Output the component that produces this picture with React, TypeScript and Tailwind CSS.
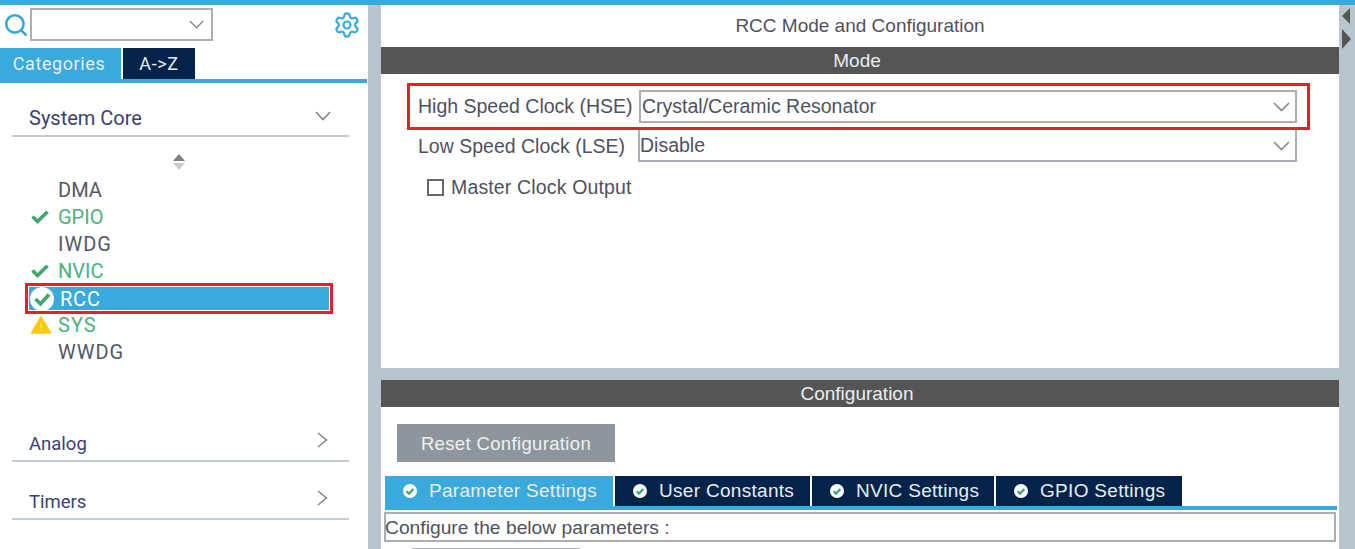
import { Search, Settings } from 'lucide-react';

const sans = "font-['Liberation_Sans',sans-serif]";
const roboto = "font-['Roboto',sans-serif]";

function Chev({ w = 17, h = 10, color = '#85898d' }: { w?: number; h?: number; color?: string }) {
  return (
    <svg width={w} height={h} viewBox="0 0 17 10" preserveAspectRatio="none" className="shrink-0">
      <path d="M1 1 L8.5 8.5 L16 1" fill="none" stroke={color} strokeWidth="1.6" />
    </svg>
  );
}

function ChevRight() {
  return (
    <svg width="11" height="16" viewBox="0 0 11 16" className="-mt-[5px] shrink-0">
      <path d="M1 1 L9.5 8 L1 15" fill="none" stroke="#7d8286" strokeWidth="1.4" />
    </svg>
  );
}

function TabCheck() {
  return (
    <svg width="14" height="14" viewBox="0 0 14 14" className="shrink-0">
      <circle cx="7" cy="7" r="7" fill="#ffffff" />
      <path d="M3.6 7.2 L6 9.6 L10.4 4.9" fill="none" stroke="#3aa56e" strokeWidth="2.2" />
    </svg>
  );
}

function Warn() {
  return (
    <svg width="20" height="18" viewBox="0 0 20 18">
      <path d="M10 1 L19.5 17 L0.5 17 Z" fill="#fdc900" stroke="#fdc900" strokeLinejoin="round" strokeWidth="1.5" />
      <path d="M10 7 V12 M10 13.5 V15" stroke="#fff3b0" strokeWidth="1.2" />
    </svg>
  );
}

function Item({ name, state, wide }: { name: string; state?: 'ok' | 'warn'; wide?: boolean }) {
  return (
    <div className="flex h-[27px] items-center">
      <span className="ml-[31px] flex w-[27px] items-center">
        {state === 'ok' && (
          <svg width="18" height="14" viewBox="0 0 18 14">
            <path d="M1.5 6.5 L6.5 11.5 L16.5 1.8" fill="none" stroke="#3fa86f" strokeWidth="3.6" />
          </svg>
        )}
        {state === 'warn' && <Warn />}
      </span>
      <span className={`${state ? 'text-[#4bb27e]' : 'text-[#55566a]'} ${wide ? 'tracking-[1px]' : ''}`}>{name}</span>
    </div>
  );
}

function Category({ name, open }: { name: string; open?: boolean }) {
  return (
    <div className="mx-3 flex h-[38px] w-[337px] items-center justify-between border-b-2 border-[#c3ccd2] pl-[17px] text-[#3a4270]">
      {open ? (
        <>
          <span className="pt-[1px]">{name}</span>
          <span className="mr-[18px] -mt-[3px]"><Chev w={16} h={10} color="#7d8286" /></span>
        </>
      ) : (
        <>
          <span className="pt-[5px] text-[18.5px]">{name}</span>
          <span className="mr-[21px]"><ChevRight /></span>
        </>
      )}
    </div>
  );
}

function ConfigTab({ label, active, width }: { label: string; active?: boolean; width: string }) {
  return (
    <div className={`flex h-[30px] items-center gap-[12px] pl-[18px] text-[19px] tracking-[0.3px] text-[#e8eef2] ${width} ${active ? 'bg-[#3aa9dc]' : 'bg-[#03234b]'}`}>
      <TabCheck />
      <span>{label}</span>
    </div>
  );
}

export default function App() {
  return (
    <div className={`flex h-[549px] w-[1355px] flex-col overflow-hidden bg-[#b9c5cc] text-[19.5px] ${sans}`}>
      <div className="h-[5px] shrink-0 bg-[#3aa9dc]" />
      <div className="flex min-h-0 flex-1">
        {/* left panel */}
        <div className={`mr-[13px] w-[368px] shrink-0 bg-white text-[20px] ${roboto}`}>
          <div className="flex items-center pl-[3px] pr-[8px] pt-[3px]">
            <Search size={26} strokeWidth={2.4} className="-mr-[1px] mt-[1px] text-[#3aa9dc]" />
            <div className="ml-[2px] flex h-[33px] w-[183px] items-center justify-end border-2 border-[#a9afb4] pr-[7px]">
              <Chev w={15} h={9} />
            </div>
            <Settings size={28} strokeWidth={1.9} className="ml-auto -mr-[1px] text-[#3aa9dc]" />
          </div>
          <div className="mt-[7px] flex h-[31px] items-stretch gap-[2px] text-[18px] tracking-[0.6px] text-[#e4eef4]">
            <div className="flex w-[121px] items-center justify-center bg-[#3aa9dc] pb-[1px] pr-[3px]">Categories</div>
            <div className="flex w-[72px] items-center justify-center bg-[#03234b] pb-[1px]">A-&gt;Z</div>
          </div>
          <div className="h-[4px] w-[367px] bg-[#3aa9dc]" />
          <div className="h-[16px]" />
          <Category name="System Core" open />
          <div className="flex h-[40px] flex-col items-center pr-[10px] pt-[17px]">
            <div className="h-0 w-0 border-x-[6px] border-b-[7px] border-x-transparent border-b-[#7c8185]" />
            <div className="mt-[2px] h-0 w-0 border-x-[6px] border-t-[7px] border-x-transparent border-t-[#c9cdd0]" />
          </div>
          <div className="-mt-[1px]">
            <Item name="DMA" />
            <Item name="GPIO" state="ok" />
            <Item name="IWDG" wide />
            <Item name="NVIC" state="ok" />
            <div className="mx-[25px] -mb-[3px] -mt-[1px] flex h-[31px] w-[308px] items-center border-[3px] border-[#ec1c2b] bg-[#3aa9dc] text-white outline-1 -outline-offset-4 outline-white">
              <svg width="24" height="24" viewBox="0 0 24 24" className="ml-[2px] shrink-0">
                <circle cx="12" cy="12" r="12" fill="#ffffff" />
                <path d="M5.5 12 L10.5 17 L19 7.5" fill="none" stroke="#3fa86f" strokeWidth="3.6" />
              </svg>
              <span className="ml-[6px] tracking-[0.8px]">RCC</span>
            </div>
            <Item name="SYS" state="warn" wide />
            <Item name="WWDG" wide />
          </div>
          <div className="h-[59px]" />
          <Category name="Analog" />
          <div className="h-[20px]" />
          <Category name="Timers" />
        </div>

        {/* right panel */}
        <div className="flex w-[958px] shrink-0 flex-col gap-[12px]">
          <div className="h-[363px] bg-white text-[#50515f]">
            <div className="flex h-[42px] items-center justify-center text-[19px]">RCC Mode and Configuration</div>
            <div className="flex h-[27px] items-center justify-center bg-[#545554] pr-[6px] pt-[1px] text-[19px] text-[#e8eef2]">Mode</div>
            <div className="ml-[26px] mt-[9px] flex h-[47px] w-[903px] items-center border-[3px] border-[#ec1c2b] pl-[8px]">
              <span className="mr-[5px] w-[216px] whitespace-nowrap">High Speed Clock (HSE)</span>
              <div className="-mr-[1px] flex h-[33px] w-[658px] items-center justify-between border-2 border-[#a9afb4] bg-white pl-[1px] pr-[5px]">
                <span>Crystal/Ceramic Resonator</span>
                <Chev />
              </div>
            </div>
            <div className="ml-[37px] flex h-[32px] items-center pt-[1px]">
              <span className="mr-[4px] w-[216px] whitespace-nowrap">Low Speed Clock (LSE)</span>
              <div className="-mt-[1px] flex h-[32px] w-[659px] items-center justify-between border-x-2 border-b-2 border-[#a9afb4] pr-[5px] pt-[2px]">
                <span>Disable</span>
                <Chev />
              </div>
            </div>
            <div className="ml-[46px] mt-[11px] flex items-center gap-[7px]">
              <div className="h-[17px] w-[17px] border-2 border-[#66686b]" />
              <span className="tracking-[0.15px]">Master Clock Output</span>
            </div>
          </div>
          <div className="min-h-0 flex-1 bg-white">
            <div className="flex h-[27px] items-center justify-center bg-[#545554] pr-[6px] pt-[1px] text-[19px] text-[#e8eef2]">Configuration</div>
            <div className="ml-[16px] mt-[17px] flex h-[38px] w-[218px] items-center justify-center bg-[#8f969b] pt-[1px] text-[18.5px] tracking-[0.35px] text-[#eef1f3]">Reset Configuration</div>
            <div className="ml-[4px] mt-[14px] flex gap-[2px]">
              <ConfigTab label="Parameter Settings" active width="w-[228px]" />
              <ConfigTab label="User Constants" width="w-[195px]" />
              <ConfigTab label="NVIC Settings" width="w-[182px]" />
              <ConfigTab label="GPIO Settings" width="w-[186px]" />
            </div>
            <div className="ml-[4px] h-[4px] w-[952px] bg-[#3aa9dc]" />
            <div className="ml-[3px] mt-[2px] flex h-[30px] w-[952px] items-center border-2 border-[#a9afb4] pt-[2px] text-[19.25px] text-[#50515f]">
              <span className="-ml-[1px]">Configure the below parameters :</span>
            </div>
            <div className="ml-[31px] mt-[6px] h-[2px] w-[168px] bg-[#a9afb4]" />
          </div>
        </div>

        {/* right strip */}
        <div className="relative flex-1">
          <div className="absolute left-[3px] top-[3px] h-0 w-0 border-y-[8px] border-r-[8px] border-y-transparent border-r-[#545554]" />
          <div className="absolute left-[3px] top-[24px] h-0 w-0 border-y-[10px] border-l-[9px] border-y-transparent border-l-[#545554]" />
        </div>
      </div>
    </div>
  );
}
